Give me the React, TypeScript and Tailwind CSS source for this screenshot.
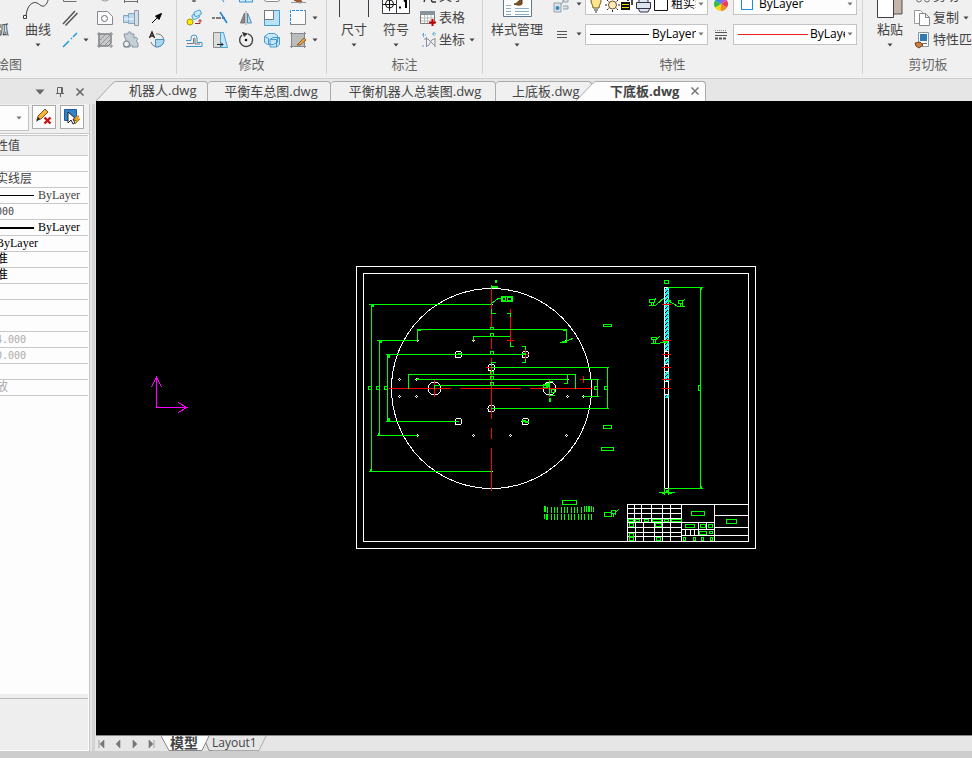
import type { ReactNode } from "react";
import clsx from "clsx";

function Caret({ className }: { className?: string }) {
  return (
    <svg viewBox="0 0 6 4" className={clsx("h-1 w-1.5 shrink-0 fill-[#444]", className)}>
      <path d="M0.5 0.5h5L3 3.5z" />
    </svg>
  );
}

function Icon({ children }: { children?: ReactNode }) {
  return (
    <svg viewBox="0 0 20 20" className="size-5 shrink-0" fill="none" stroke="#6b7075">
      {children}
    </svg>
  );
}

function Tool({ label, children }: { label: string; children?: ReactNode }) {
  return (
    <button aria-label={label} className="flex h-[22px] w-[26px] items-center justify-center">
      <Icon>{children}</Icon>
    </button>
  );
}

function BigTool({
  label,
  className,
  children,
}: {
  label: string;
  className?: string;
  children?: ReactNode;
}) {
  return (
    <button className={clsx("flex shrink-0 flex-col items-center", className)}>
      <svg viewBox="0 0 32 32" className="size-8" fill="none" stroke="#3c4046">
        {children}
      </svg>
      <span className="h-5 leading-5 whitespace-nowrap">{label}</span>
      <span className="flex h-3 items-center">
        <Caret />
      </span>
    </button>
  );
}

function Group({
  title,
  className,
  children,
}: {
  title: string;
  className: string;
  children: ReactNode;
}) {
  return (
    <section className={clsx("flex shrink-0 flex-col justify-end border-r border-[#d2d2d2]", className)}>
      <div className="flex items-end">{children}</div>
      <h2 className="pt-1 pb-px text-center leading-[18px] text-[#666]">{title}</h2>
    </section>
  );
}

function Combo({ label, value, children }: { label: string; value: string; children: ReactNode }) {
  return (
    <label className="flex h-[21px] items-center gap-0.5 overflow-hidden border border-[#c4c4c4] bg-[#fdfdfd] pr-[3px] pl-1 text-xs text-black">
      {children}
      <select aria-label={label} className="min-w-0 flex-1 appearance-none bg-transparent">
        <option>{value}</option>
      </select>
      <Caret className="fill-[#777]" />
    </label>
  );
}

function DrawGroup() {
  return (
    <div className="flex w-[177px] shrink-0 justify-end">
      <Group title="绘图" className="w-[335px]">
        <div className="ml-auto flex items-end pr-1.5">
          <BigTool label="圆弧" className="mr-1 w-10">
            <path d="M4 28A24 24 0 0 1 28 4" />
          </BigTool>
          <BigTool label="曲线" className="mr-px w-9">
            <path d="M4 29C5 18 11 14 15 16s6 6 10 0c2-4 1-9 5-12" />
            <path d="M1.500 28.500h3v3h-3z" fill="#fff" />
          </BigTool>
          <div className="flex w-[35px] flex-col">
            <Tool label="多段线">
              <path d="M3.500 4v11.500h13M3.500 12.500h13" />
            </Tool>
            <Tool label="平行线">
              <path d="M3 16L15 3M5.500 17.500L17.500 5" stroke="#555" strokeWidth="1.500" />
            </Tool>
            <div className="flex items-center">
              <Tool label="中心线">
                <path d="M3 17l6-6M11 9l1-1M13 7l4-4" stroke="#1f9be0" strokeWidth="1.500" />
              </Tool>
              <Caret />
            </div>
          </div>
          <div className="grid grid-cols-3">
            <Tool label="圆">
              <circle cx="10" cy="9" r="6" stroke="#999" />
            </Tool>
            <Tool label="标尺">
              <path d="M3.500 13v4M16.500 13v4M3 15.500h14" />
            </Tool>
            <Tool label="点" />
            <Tool label="轮廓">
              <path d="M2.500 3.500h10l5 5v8h-15z" fill="#fafafa" stroke="#85898d" />
              <circle cx="9.500" cy="10.500" r="3" />
            </Tool>
            <Tool label="轴">
              <path d="M2.500 7.500h5v7h-5zM7.500 5.500h6v10h-6z" fill="#b7d9f1" stroke="#8aa5bb" />
              <path d="M3 11h10" stroke="#fff" />
              <path d="M13.500 2.500h4v15h-4z" fill="#d5dfe8" stroke="#8f9aa5" />
            </Tool>
            <Tool label="箭头">
              <path d="M5 15l7-7" stroke="#000" />
              <path d="M14.500 5.500l-6 2.500 3.500 3.500z" fill="#000" stroke="#000" />
            </Tool>
            <Tool label="剖面线">
              <path d="M4 4h12v9l-3 3H4z" fill="#c9c9c9" />
              <path d="M2 4h16M2 16h16M4 2v16M16 2v16" stroke="#85898d" />
              <path d="M4 11l7-7M5 15L16 4M9 16l7-7" stroke="#8e9499" />
            </Tool>
            <Tool label="零件库">
              <path
                d="M3 4h4c-1-3 4-3 3 0h3v4c3-2 5 2 2 3l2 2v4h-6c1-3-2-3-2 0H3c-1-4 4-6 1-9z"
                fill="#c6ced6"
                stroke="#8595a5"
              />
              <circle cx="5.500" cy="14" r="3" fill="#eee" />
            </Tool>
            <Tool label="文字填充">
              <path d="M9 4a6.500 6.500 0 1 1-5 8" stroke="#777" />
              <path d="M8.500 9.500h8.500c0 5-3 7.500-8.500 7.500z" fill="#a9d7f2" stroke="#4b8fbd" />
              <path d="M2.500 8l2.500-6 2.500 6M3 6h4" stroke="#222" strokeWidth="1.400" />
            </Tool>
          </div>
        </div>
      </Group>
    </div>
  );
}

function ModifyGroup() {
  return (
    <Group title="修改" className="w-[150px]">
      <div className="grid grid-cols-5 pl-1">
        <Tool label="移动">
          <path d="M10 4v12M8 15h4" stroke="#444" />
        </Tool>
        <Tool label="修剪">
          <path d="M8 8l6 8M3 12h5" stroke="#1f88d8" />
        </Tool>
        <Tool label="阵列">
          <path d="M3.500 7v9h6V7zM9.500 7v9h7V7z" fill="#d5ecfa" stroke="#3293cc" />
        </Tool>
        <Tool label="矩形">
          <rect x="2.500" y="4.500" width="15" height="11" rx="2" fill="#fff" stroke="#888" />
        </Tool>
        <Tool label="格式刷">
          <path d="M8 8l6 8-2 1-6-3z" fill="#b15b35" stroke="#7d3d22" />
          <path d="M3 16.500h15" stroke="#999" />
        </Tool>
        <Tool label="复制对象">
          <rect x="8" y="6" width="7" height="5" rx="2" fill="#cbe8f8" stroke="#4ba3d6" transform="rotate(-25 11 8)" />
          <rect x="10" y="3" width="7" height="5" rx="2" fill="#cbe8f8" stroke="#4ba3d6" transform="rotate(-25 13 5)" />
          <circle cx="6" cy="14" r="3" fill="#ffec00" stroke="#a79512" />
          <path d="M11 15.500h5v-3M14.500 13.500l1.500-2 1.500 2" stroke="#b02020" />
        </Tool>
        <Tool label="打断">
          <path d="M2 10h3M6 10h5M12 10h3" stroke="#555" strokeWidth="1.300" />
          <path d="M10 4l7 11" stroke="#1f7fd8" strokeWidth="1.500" />
        </Tool>
        <Tool label="镜像">
          <path d="M8.500 5v10h-4z" fill="#888" stroke="#777" />
          <path d="M11.500 5v10h4z" fill="#bce0f6" stroke="#4c8db8" />
          <path d="M10 3v14" stroke="#999" />
        </Tool>
        <Tool label="缩放">
          <path d="M2.500 2.500h15v15h-15z" fill="#b9e1f8" stroke="#459bcb" />
          <path d="M2.500 2.500h9v9h-9z" fill="#fff" stroke="#777" />
        </Tool>
        <Tool label="拉伸">
          <path d="M2.500 2.500h15v14h-15z" fill="#fafafa" stroke="none" />
          <path d="M2.500 17V2.500H17" stroke="#268fe0" strokeDasharray="3 1" />
          <path d="M17.500 2v14.500h-15" stroke="#888" />
        </Tool>
        <Tool label="偏移">
          <path d="M2 16.500h16v-4h-5V8a3 3 0 0 0-6 0v2.500H2" stroke="#3e9ace" />
          <path d="M3 13.500h6.500V8.500a1 1 0 0 1 1.500 0v5.500h5" stroke="#777" />
        </Tool>
        <Tool label="拉长">
          <path d="M3.500 2.500h7v15h-7z" fill="#ddd" stroke="#888" />
          <path d="M10.500 2.500h3l4 15h-7z" fill="#c3e6fa" stroke="#4ba3d6" />
          <path d="M7 14.500h6M11 12.500l2 2-2 2" stroke="#222" />
        </Tool>
        <Tool label="旋转">
          <path d="M6 5a6.500 6.500 0 1 0 6-1.200" stroke="#444" strokeWidth="1.400" />
          <path d="M6 2l6 1.500-4 3.500z" fill="#333" stroke="none" />
          <circle cx="10" cy="10" r="1.300" fill="#111" stroke="none" />
        </Tool>
        <Tool label="图块">
          <path
            d="M2.500 6.500l4-3h6l3 2v7l-4 2h-6l-3-2zM8 9.500l3-2h6.500v7l-3 2.500H8zM8 9.500h6.500V17M14.500 9.500l3-2M2.500 6.500l4 2v6"
            fill="#c7e7f8"
            stroke="#4a9ccc"
          />
        </Tool>
        <Tool label="编辑填充">
          <path d="M3.500 3.500h13v13h-13z" fill="#bcbcbc" />
          <path d="M2 3.500h16M2 16.500h16M3.500 2v16M16.500 2v16" stroke="#85898d" />
          <path d="M9 15l7-7 2 2-6 5z" fill="#f0aa3c" stroke="#8d5925" />
        </Tool>
      </div>
      <div className="flex flex-col pl-px">
        <span className="flex h-[22px] items-center">
          <Caret />
        </span>
        <span className="flex h-[22px] items-center">
          <Caret />
        </span>
      </div>
    </Group>
  );
}

function AnnotateGroup() {
  return (
    <Group title="标注" className="w-[156px]">
      <BigTool label="尺寸" className="w-[54px]">
        <path d="M1.500 4v26M30.500 4v26" />
      </BigTool>
      <BigTool label="符号" className="w-[30px]">
        <path d="M2.500 2.500h27v24h-27zM16.500 2v24" fill="#fff" />
        <circle cx="9.500" cy="17" r="4" stroke="#111" />
        <path d="M9.500 10v14M3 17.500h13" stroke="#111" />
        <path d="M19 20.500h2M24 14.500l2-1.500v8" stroke="#000" strokeWidth="2" />
      </BigTool>
      <div className="flex flex-col pl-2">
        <button className="flex h-[22px] items-center">
          <Icon>
            <path d="M5 16l4-13 4 13M6 12h6M13 16h4" stroke="#333" strokeWidth="1.400" />
          </Icon>
          文字
        </button>
        <button className="flex h-[22px] items-center">
          <Icon>
            <path d="M1.500 3.500h14v12h-14z" fill="#fff" stroke="#777" />
            <path d="M1 3h15v4H1z" fill="#8a929c" stroke="none" />
            <path d="M2 10h13M2 13h13M5.500 7v8M8.500 7v8M12 7v8" stroke="#bbb" />
            <path d="M13.500 11v7M10 14.500h7" stroke="#c90000" strokeWidth="2" />
          </Icon>
          表格
        </button>
        <button className="flex h-[22px] items-center">
          <Icon>
            <path d="M3 5h4M4.500 3v4M3 16h3M13 4h4M15 2v4" stroke="#4f9ed8" strokeDasharray="2 1" />
            <path d="M7.500 7v10M5 9h4l7 7M16 8v9M8 16c4 0 2-7 8-7" stroke="#87909a" />
          </Icon>
          坐标
          <Caret className="ml-1" />
        </button>
      </div>
    </Group>
  );
}

function PropertyGroup() {
  return (
    <Group title="特性" className="w-[380px]">
      <BigTool label="样式管理" className="w-[68px]">
        <path d="M2.500 2.500h28v27h-28z" fill="#fff" stroke="#60788c" />
        <path d="M5 18.500h5M5 21.500h5M5 24.500h5M5 27.500h5M14 21.500h14M14 24.500h14M14 27.500h14" stroke="#8bacc5" />
        <path d="M13 17c4 0 3-4 8-4v4c-2 2-5 1-8 0z" fill="#805020" stroke="#5a3510" />
      </BigTool>
      <div className="flex flex-1 items-center pb-1.5">
        <div className="grid w-[34px] gap-2">
          <button aria-label="图层" className="flex h-[22px] items-center gap-[5px]">
            <Icon>
              <path d="M3 9h7v9H3zM12 4h5v4h-5zM12 12h5v3h-5M10 11l3-5" fill="#dce3e8" stroke="#95a0a9" />
              <circle cx="6.500" cy="14" r="2" fill="#2e89c7" stroke="none" />
            </Icon>
            <Caret />
          </button>
          <button aria-label="线型" className="flex h-[22px] items-center gap-[5px]">
            <Icon>
              <path d="M6 7.500h10M6 10.500h10M6 13.500h10" stroke="#555" />
            </Icon>
            <Caret />
          </button>
        </div>
        <div className="grid w-[123px] gap-[9px]">
          <Combo label="图层" value="粗实线层">
            <svg viewBox="0 0 79 20" className="h-5 w-[79px] shrink-0" fill="none">
              <path d="M1 7a5 5 0 0 1 10 0c0 3-2 3-2 7H3c0-4-2-4-2-7z" fill="#ffe68a" stroke="#665722" />
              <path d="M4 16h4M5 18h2" stroke="#333" />
              <circle cx="22.500" cy="11" r="4" fill="#ffedba" stroke="#754a25" />
              <path d="M22.500 4v2M22.500 16v2M15 11h2M28 11h2M17 6l1.500 1.500M28 6l-1.500 1.500M17 16l1.500-1.500M28 16l-1.500-1.500" stroke="#222" />
              <path d="M31 8h9v8h-9z" fill="#111" />
              <path d="M32 10.500h7M32 13.500h7" stroke="#e4e000" />
              <path d="M38 7V3h4v8" stroke="#111" strokeWidth="1.500" />
              <path d="M49 9V3h9v6M46.500 8.500h14v6h-14zM48 14l2 4h8l2-4" fill="#dce5f0" stroke="#334" />
              <path d="M64.500 3.500h13v13h-13z" fill="#fff" stroke="#111" />
            </svg>
          </Combo>
          <Combo label="线型" value="ByLayer">
            <svg viewBox="0 0 60 3" className="h-[3px] w-[60px] shrink-0">
              <path d="M0 1h59v1H0z" />
            </svg>
          </Combo>
        </div>
        <div className="grid w-[25px] justify-items-center gap-2">
          <button aria-label="颜色" className="flex h-[22px] items-center">
            <svg viewBox="0 0 14 14" className="size-3.5">
              <path d="M7 7V0a7 7 0 0 1 6 3.500z" fill="#b45bd8" />
              <path d="M7 7l6-3.500a7 7 0 0 1 0 7z" fill="#e83e4c" />
              <path d="M7 7l6 3.500A7 7 0 0 1 7 14z" fill="#f28a26" />
              <path d="M7 7v7a7 7 0 0 1-6-3.500z" fill="#f4d90f" />
              <path d="M7 7l-6 3.500a7 7 0 0 1 0-7z" fill="#35b944" />
              <path d="M7 7L1 3.500A7 7 0 0 1 7 0z" fill="#318de9" />
            </svg>
          </button>
          <button aria-label="线宽" className="flex h-[22px] items-center">
            <Icon>
              <path d="M4 6.500h12" stroke="#888" strokeDasharray="1 1" />
              <path d="M4 8.500h12M4 11.500h12" stroke="#555" />
              <path d="M4 14.500h12" stroke="#555" strokeWidth="2" strokeDasharray="3 1" />
            </Icon>
          </button>
        </div>
        <div className="grid w-[124px] gap-[9px]">
          <Combo label="颜色" value="ByLayer">
            <span className="mr-1 ml-[3px] size-3 shrink-0 border border-[#2088dd] bg-white" />
          </Combo>
          <Combo label="线宽" value="ByLayer">
            <svg viewBox="0 0 70 3" className="h-[3px] w-[70px] shrink-0 fill-[#ee1c1c]">
              <path d="M0 1h70v1H0z" />
            </svg>
          </Combo>
        </div>
      </div>
    </Group>
  );
}

function ClipboardGroup() {
  return (
    <Group title="剪切板" className="w-[131px]">
      <BigTool label="粘贴" className="ml-1 w-[46px]">
        <path d="M14 2h14v25H14z" fill="#c2b6aa" stroke="#55504c" />
        <path d="M3.500 11.500l5-5h11v24h-16zM8.500 6.500v5h-5" fill="#fff" />
      </BigTool>
      <div className="flex flex-col whitespace-nowrap">
        <button className="flex h-[22px] items-center">
          <Icon>
            <path d="M8 11L14 2M12 11L6 2" />
            <circle cx="6" cy="13.500" r="2.500" />
            <circle cx="14" cy="13.500" r="2.500" />
          </Icon>
          剪切
        </button>
        <button className="flex h-[22px] items-center">
          <Icon>
            <path d="M1.500 2.500h6l3 3v10h-9z" fill="#fff" stroke="#999" />
            <path d="M6.500 5.500h6l4 4v8h-10zM12.500 5.500v4h4" fill="#fff" stroke="#888" />
          </Icon>
          复制
          <Caret className="ml-1" />
        </button>
        <button className="flex h-[22px] items-center">
          <Icon>
            <path d="M5.500 2.500h10v14h-10z" fill="#fff" stroke="#8a96a0" />
            <path d="M7 4h7v7H7z" fill="#2f79b4" stroke="none" />
            <path d="M7 13.500h7" />
            <path d="M2 13l5-1 3 3-4 3-3-2z" fill="#c78040" stroke="#7c4218" />
          </Icon>
          特性匹配
        </button>
      </div>
    </Group>
  );
}

const properties: { value: string; tone: string; line?: string; mono?: boolean; indent?: boolean }[] = [
  { value: "", tone: "" },
  { value: "粗实线层", tone: "text-[#444]" },
  { value: "ByLayer", tone: "text-[#444]", line: "h-px" },
  { value: "0.000", tone: "text-[#444]", mono: true },
  { value: "ByLayer", tone: "text-black", line: "h-0.5" },
  { value: "ByLayer", tone: "text-black", indent: true },
  { value: "标准", tone: "text-black" },
  { value: "标准", tone: "text-black" },
  { value: "", tone: "" },
  { value: "", tone: "" },
  { value: "", tone: "" },
  { value: "294.000", tone: "text-[#aaa]", mono: true },
  { value: "210.000", tone: "text-[#aaa]", mono: true },
  { value: ".", tone: "text-[#aaa]", indent: true },
  { value: "缩放", tone: "text-[#aaa]" },
];

function PropertiesPanel() {
  return (
    <aside className="flex w-24 shrink-0 flex-col bg-[#e6e6e6]">
      <div className="flex h-[25px] items-center justify-end gap-2.5 pr-2.5">
        <button aria-label="选项">
          <svg viewBox="0 0 10 6" className="h-1.5 w-2.5 fill-[#666]">
            <path d="M0.500 0.500h9L5 5.500z" />
          </svg>
        </button>
        <button aria-label="固定">
          <svg viewBox="0 0 10 10" className="size-2.5" fill="none" stroke="#666">
            <path d="M2.500 6V0.500h5V6M1 6.500h8M5.500 7v3M6.500 1v5" />
          </svg>
        </button>
        <button aria-label="关闭" className="pr-px">
          <svg viewBox="0 0 10 10" className="size-2.5" stroke="#666" strokeWidth="1.600">
            <path d="M1.500 1.500l7 7M8.500 1.500l-7 7" />
          </svg>
        </button>
      </div>
      <div className="flex min-h-0 flex-1">
        <div className="flex min-w-0 flex-1 flex-col border-r border-[#c8c8c8] bg-[#f0f0f0]">
          <div className="flex items-start gap-[3px] pt-px pb-0.5">
            <div className="flex h-[26px] w-[29px] items-center justify-end border border-l-0 border-[#c4c4c4] bg-[#fdfdfd] pr-1.5">
              <Caret className="fill-[#777]" />
            </div>
            <button aria-label="取消选择" className="size-6 border border-[#aaa] bg-[#fdfdfd]">
              <svg viewBox="0 0 22 22" fill="none">
                <path d="M4 14l1-4 7-7 3 3-7 7z" fill="#f5b532" stroke="#73502a" />
                <path d="M3 16l2-5 2 2z" fill="#222" />
                <path d="M11.500 11.500l6 6M17.500 11.500l-6 6" stroke="#cc1111" strokeWidth="2.400" />
              </svg>
            </button>
            <button aria-label="快速选择" className="ml-px size-6 border border-[#aaa] bg-[#fdfdfd]">
              <svg viewBox="0 0 22 22" fill="none">
                <path d="M3.500 3.500h12v11h-12z" fill="#3382c8" stroke="#1d5a9a" />
                <path d="M7 6v11l3-3 2 4 2-1-2-4h3z" fill="#fff" stroke="#222" />
                <path d="M16 10l-3 4h3l-2 4 5-5h-3l2-3z" fill="#ffc02c" stroke="#d07a12" />
              </svg>
            </button>
          </div>
          <div className="flex min-h-0 flex-1 flex-col border-t border-[#c8c8c8] bg-[#fdfdfd]">
            <div className="flex flex-1 justify-end overflow-hidden pt-px pr-px">
              <table className="h-min w-[104px] shrink-0 table-fixed border-collapse text-xs [font-family:'Liberation_Serif','Noto_Sans_CJK_SC',serif]">
                <thead>
                  <tr className="h-5 border-y border-[#c8c8c8] bg-[#f0f0f0]">
                    <th className="p-0 text-left text-xs leading-[18px] font-normal text-[#444]">属性值</th>
                  </tr>
                </thead>
                <tbody>
                  {properties.map(({ value, tone, line, mono, indent }, i) => (
                    <tr key={i} className="h-4 border-b border-[#c8c8c8]">
                      <td className={clsx("p-0 leading-[15px]", tone)}>
                        <span className={clsx("flex h-[15px] items-center gap-1", indent && "pl-3")}>
                          {line && <span className={clsx("w-[50px] shrink-0 bg-black", line)} />}
                          <span className={clsx(mono && "text-[10px] [font-family:'DejaVu_Sans_Mono',monospace]")}>
                            {value}
                          </span>
                        </span>
                      </td>
                    </tr>
                  ))}
                </tbody>
              </table>
            </div>
            <div className="mr-px h-[57px] border-t-4 border-b border-t-[#eee] border-b-[#fff] bg-[#eee]">
              <div className="border-t border-[#bbb]" />
            </div>
          </div>
        </div>
        <div className="mr-px ml-0.5 w-[3px] bg-[#d4d4d4]" />
      </div>
    </aside>
  );
}

function SlantEdge({ fill }: { fill: string }) {
  return (
    <svg viewBox="0 0 20 20" className="size-5 shrink-0">
      <path d="M0 20L16 3Q18.500 0.500 20 0.500V20z" fill={fill} />
      <path d="M0 20L16 3Q18.500 0.500 20 0.500" fill="none" stroke="#aaa" />
    </svg>
  );
}

function FileTabs() {
  const tab = "h-5 border-t border-r border-[#aaa] bg-[#f0f0f0] pb-0.5 leading-4 whitespace-nowrap rounded-tr";
  return (
    <nav className="flex h-[22px] items-end bg-[#e6e6e6]">
      <button className="flex">
        <SlantEdge fill="#f0f0f0" />
        <span className={clsx(tab, "w-[92px] pl-[13px] text-left")}>机器人.dwg</span>
      </button>
      <button className={clsx(tab, "w-[123px] rounded-tl pl-1")}>平衡车总图.dwg</button>
      <button className={clsx(tab, "w-[165px] rounded-tl pl-1")}>平衡机器人总装图.dwg</button>
      <button className={clsx(tab, "w-[96px] rounded-tl pl-4 text-left")}>上底板.dwg</button>
      <div className="z-10 -ml-4 flex">
        <SlantEdge fill="#fdfdfd" />
        <span className={clsx(tab, "flex w-[110px] items-center justify-between bg-[#fdfdfd] pr-1.5 pl-3.5")}>
          <button className="font-bold">下底板.dwg</button>
          <button aria-label="关闭">
            <svg viewBox="0 0 8 8" className="size-2" stroke="#777" strokeWidth="1.500">
              <path d="M0.500 0.500l7 7M7.500 0.500l-7 7" />
            </svg>
          </button>
        </span>
      </div>
    </nav>
  );
}

// x, y, width, height
const greenBoxes = [
  [368.5, 386.5, 3, 3], [376.5, 386.5, 3, 3], [384.5, 386.5, 3, 3], [594.5, 386.5, 3, 3], [604.5, 386.5, 3, 3],
  [490.5, 327.5, 3, 2], [490.5, 333.5, 3, 3], [490.5, 351.5, 3, 3], [490.5, 371.5, 3, 3], [490.5, 376.5, 3, 3], [490.5, 382.5, 3, 3],
  [501.5, 296.5, 11, 5], [502.5, 297.5, 3, 3], [507.5, 297.5, 4, 3],
  [551.5, 389.5, 3, 3], [543.5, 384.5, 4, 3],
  [562.5, 500.5, 14, 4],
  [603.5, 324.5, 8, 2], [603.5, 425.5, 8, 3], [601.5, 447.5, 12, 3], [604.5, 512.5, 7, 4], [611.5, 510.5, 4, 3],
  [698.5, 385.5, 2, 5], [664.5, 280.5, 4, 3],
  [649.5, 299.5, 5, 3], [678.5, 300.5, 4, 3], [651.5, 337.5, 5, 2],
  [691.5, 511.5, 13, 4], [726.5, 519.5, 10, 4],
  [685.5, 524.5, 9, 3], [700.5, 524.5, 5, 3], [708.5, 524.5, 4, 3],
  [699.5, 531.5, 7, 3], [709.5, 531.5, 3, 2],
  [683.5, 537.5, 2, 3], [693.5, 537.5, 2, 3], [701.5, 537.5, 2, 3], [710.5, 537.5, 2, 3],
  [629.5, 523.5, 4, 3], [655.5, 523.5, 6, 3], [629.5, 533.5, 4, 3], [629.5, 537.5, 4, 3], [656.5, 537.5, 4, 3],
  [628.5, 519.5, 5, 2], [635.5, 519.5, 4, 2], [644.5, 519.5, 4, 2], [652.5, 519.5, 9, 2], [664.5, 519.5, 4, 2], [671.5, 519.5, 10, 2],
];

const greenFills = [
  [495, 280, 2, 3], [492, 286, 6, 2], [549, 398, 2, 4], [522, 420, 4, 2], [525, 421, 4, 2], [458, 353, 4, 2], [522, 353, 4, 2],
  [372, 305, 2, 2], [380, 341, 2, 2], [388, 355, 2, 3], [418, 330, 3, 1], [563, 330, 3, 1], [417, 378, 2, 1],
  [370, 469, 2, 2], [378, 433, 2, 2], [388, 418, 2, 3], [701, 288, 1, 2], [701, 486, 1, 2],
  [666, 490, 3, 2], [662, 493, 3, 1], [668, 493, 4, 1], [546, 383, 4, 4], [562, 341, 5, 2], [668, 300, 3, 2], [664, 341, 4, 2],
];

const greenLines =
  "M369 304.500H491M371.500 304V471M369 471.500H491" +
  "M377 340.500H418M379.500 340V435M377 435.500H418" +
  "M386 354.500H526M387.500 354V421M386 421.500H459" +
  "M417.500 341V329.500H566.500V341M473.500 341V336.500H510" +
  "M491 367.500H609M607.500 367V408M491 408.500H609" +
  "M408.500 389V374.500H575.500V389M416 379.500H567M567.500 375V383.500H564" +
  "M434.500 389V385.500H550M583 379.500H599M597.500 379V396M583 396.500H599" +
  "M491.500 285V289M491.500 309V313.500H496M507 313.500H510.500V317M510.500 342V346.500H514" +
  "M522 346.500H525.500V350M525.500 359V362.500H522M491.500 366V362.500H496" +
  "M550 381.500H553M549.500 381V396M550 395.500H555" +
  "M668 287.500H703M700.500 287V489M668 488.500H703M659 492.500H675M664.500 488V495M668.500 488V495" +
  "M649 305.500H656M651.500 302V305M653.500 302V305M677 306.500H685M680.500 303V306M682.500 303V306" +
  "M651 343.500H660M653.500 339V343M655.500 339V343M613.500 513V517M615.500 513V515";

const noteTicks =
  "M544.500 506v6M545.500 506v6M547.500 507v6M551.500 507v6M554.500 507v6M557.500 507v6M561.500 507v6M564.500 507v6M567.500 507v6M571.500 507v6M574.500 507v6M577.500 507v6M581.500 507v6M584.500 506v6M586.500 506v6M588.500 506v6M589.500 506v6M591.500 506v6M593.500 507v5" +
  "M544.500 514v5M546.500 514v6M547.500 514v6M551.500 514v6M554.500 514v6M557.500 514v6M561.500 514v6M564.500 514v6M568.500 514v6M571.500 514v6M574.500 514v6M578.500 514v6M581.500 514v6M584.500 514v6M588.500 514v6M591.500 514v6";

const titleBlock =
  "M748 504.500H627.500V541M627 508.500H681M627 513.500H681M627 518.500H681M627 522.500H681M627 527.500H681M627 532.500H681M627 536.500H681" +
  "M634.500 504V522M641.500 504V522M651.500 504V522M662.500 504V541M670.500 504V541M635.500 522V541M643.500 522V541M654.500 522V541" +
  "M681.500 504V541M714.500 504V541M681 522.500H714M681 529.500H714M681 535.500H714M714 515.500H748M714 527.500H748M714 535.500H748" +
  "M685.500 529V535M690.500 529V535M694.500 529V535M698.500 522V535M706.500 522V529";

const holes = [
  [458.5, 354.5, 3.5], [525.5, 354.5, 3.5], [491.5, 367.5, 3.5], [491.5, 408.5, 3.5], [458.5, 421.5, 3.5], [525.5, 421.5, 3.5],
  [434.5, 388.5, 6.5], [549.5, 388.5, 6.5],
];

const pinHoles = [
  [399.5, 379.5], [416.5, 379.5], [567.5, 379.5], [399.5, 396.5], [416.5, 396.5], [567.5, 396.5], [583.5, 396.5],
  [417.5, 340.5], [473.5, 340.5], [566.5, 340.5], [417.5, 435.5], [473.5, 435.5], [510.5, 435.5], [566.5, 435.5],
  [491.5, 304.5], [491.5, 471.5],
];

function Drawing() {
  return (
    <svg
      viewBox="96 101 876 634"
      className="min-h-0 w-full flex-1 bg-black"
      fill="none"
      stroke="#fff"
      shapeRendering="crispEdges"
    >
      <defs>
        <pattern id="hatch" width="4" height="4" patternUnits="userSpaceOnUse">
          <path d="M0 4L4 0M-1 1L1 -1M3 5L5 3" stroke="#00ffff" strokeWidth="1.500" />
        </pattern>
      </defs>

      {/* UCS axes */}
      <path d="M156.500 377V407.500H187M151.500 387L156.500 377.500L161.500 387M178 402.500L187 407.500L178 412.500" stroke="#ff00ff" />

      {/* Sheet frame */}
      <path d="M356.500 266.500H755.500V548.500H356.500zM363.500 273.500H748.500V541.500H363.500z" />
      <path d={titleBlock} />

      {/* Base plate */}
      <circle cx="491.500" cy="388.500" r="100" />
      {holes.map(([cx, cy, r]) => (
        <circle key={`${cx}-${cy}`} cx={cx} cy={cy} r={r} />
      ))}
      {pinHoles.map(([cx, cy]) => (
        <path key={`${cx}-${cy}`} d={`M${cx - 1.5} ${cy}h1m1 0h1M${cx - 0.5} ${cy - 1}h1m-1 2h1`} />
      ))}

      {/* Section */}
      <path d="M664.500 287.500H668.500V488.500H664.500zM665 351.500h4M665 357.500h4M665 364.500h4M665 371.500h4M665 381.500h4M665 394.500h4M665 304.500h4" />
      <path
        d="M665 288h4v63h-4zM665 358h4v6h-4zM665 372h4v9h-4zM665 395h4v3h-4z"
        fill="url(#hatch)"
        stroke="none"
      />

      {/* Centre lines */}
      <path
        d="M389 388.500H451M460 388.500H521M530 388.500H593M491.500 289V328M491.500 338V349M491.500 358V419M491.500 428V439M491.500 448V491M510.500 309V342M507 340.500H514M434.500 380V397M549.500 380V397M486 367.500H498M525.500 350V359M526 354.500H529M580 379.500H587M583.500 376V383"
        stroke="#ff0000"
      />

      {/* Dimensions */}
      <g stroke="#00ff00">
        <path d={greenLines} />
        <path d={noteTicks} />
        <path d="M491 304L498 298.500H501M560 343L573 338.500M656 305L664 298M669 301L677 306M660 343L667 341M654 301L656 298M683 301L685 299M657 339L660 336M615 513L619 509" />
        {greenBoxes.map(([x, y, width, height]) => (
          <rect key={`${x}-${y}`} x={x} y={y} width={width} height={height} />
        ))}
      </g>
      <g fill="#00ff00" stroke="none">
        {greenFills.map(([x, y, width, height]) => (
          <rect key={`${x}-${y}`} x={x} y={y} width={width} height={height} />
        ))}
      </g>
      <path
        d="M662 304.500H671M662 340.500H671M662 354.500H671M662 367.500H671M662 379.500H671M662 388.500H671"
        stroke="#ff0000"
      />
    </svg>
  );
}

function LayoutTabs() {
  const nav = [
    ["首个布局", "M1 0v8M2 4l4-4v8z"],
    ["上个布局", "M2 4l4-4v8z"],
    ["下个布局", "M6 4l-4-4v8z"],
    ["末个布局", "M7 0v8M6 4l-4-4v8z"],
  ];
  return (
    <nav className="flex h-4 items-start border-t border-[#888] bg-[#e6e6e6]">
      <div className="flex h-4 w-[65px] items-center justify-between pr-1.5 pl-0.5">
        {nav.map(([label, d]) => (
          <button key={label} aria-label={label}>
            <svg viewBox="0 0 8 8" className="size-2 fill-[#777]" stroke="#777" strokeWidth="0.600">
              <path d={d} />
            </svg>
          </button>
        ))}
      </div>
      <button className="flex h-4 items-start">
        <svg viewBox="0 0 9 15" className="h-[15px] w-[9px] shrink-0">
          <path d="M0 0L8 15h1V0z" fill="#fdfdfd" />
          <path d="M0 0L8 14.500h1" fill="none" stroke="#888" />
        </svg>
        <span className="h-[15px] border-b border-[#888] bg-[#fdfdfd] text-sm leading-[13px] font-bold">模型</span>
        <svg viewBox="0 0 14 15" className="h-[15px] w-3.5 shrink-0">
          <path d="M0 0h11L4 15H0z" fill="#fdfdfd" />
          <path d="M11 0L4 14.500H0M8 7l3 7.500h3" fill="none" stroke="#888" />
        </svg>
      </button>
      <button className="flex h-4 items-start">
        <span className="h-[15px] border-b border-[#aaa] text-xs leading-[14px]">Layout1</span>
        <svg viewBox="0 0 12 15" className="h-[15px] w-3 shrink-0" fill="none" stroke="#aaa">
          <path d="M0 14.500h2L9 0" />
        </svg>
      </button>
    </nav>
  );
}

export default function App() {
  return (
    <div className="flex h-screen flex-col overflow-hidden bg-[#cdcdcd] text-[13px] text-[#444] [font-family:'Open_Sans','Noto_Sans_CJK_SC',sans-serif]">
      <header className="flex h-[79px] shrink-0 overflow-hidden border-b border-[#d0d0d0] bg-[#f0f0f0] pb-1">
        <DrawGroup />
        <ModifyGroup />
        <AnnotateGroup />
        <PropertyGroup />
        <ClipboardGroup />
      </header>
      <div className="flex min-h-0 flex-1 pb-[7px]">
        <PropertiesPanel />
        <main className="flex min-w-0 flex-1 flex-col">
          <FileTabs />
          <Drawing />
          <LayoutTabs />
        </main>
      </div>
    </div>
  );
}
